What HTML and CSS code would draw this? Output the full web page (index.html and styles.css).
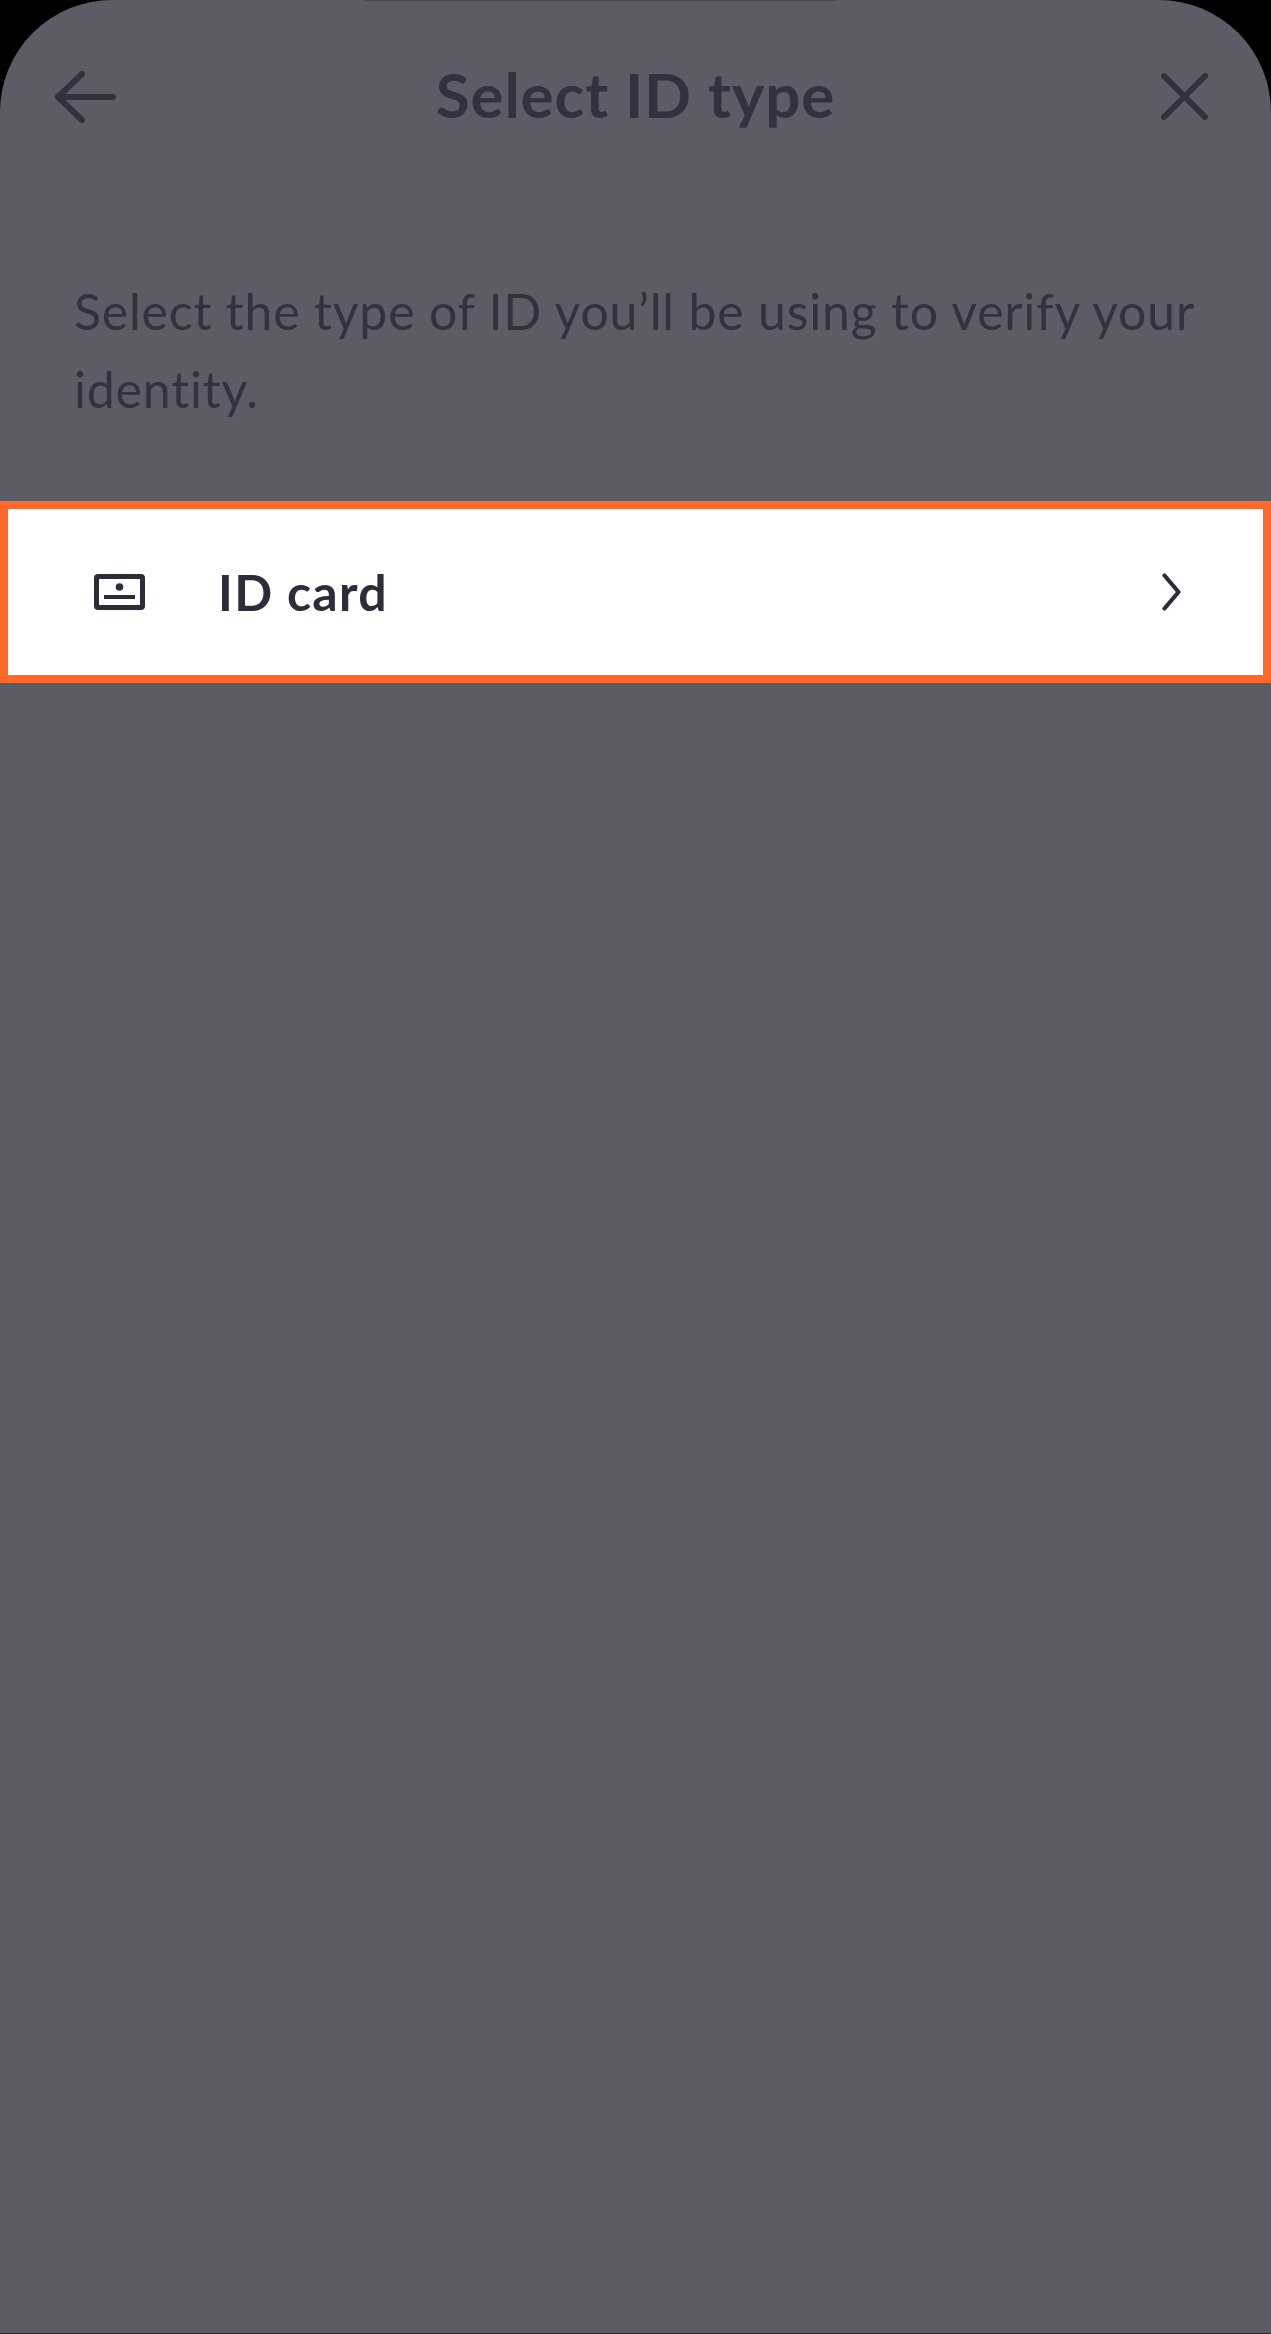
FILE: index.html
```html
<!DOCTYPE html>
<html lang="en">
<head>
    <meta charset="UTF-8">
    <meta name="viewport" content="width=device-width, initial-scale=1.0">
    <title>Select ID type</title>
    <link rel="stylesheet" href="styles.css">
</head>
<body>
    <div class="screen">
        <div class="top-edge"></div>
        <div class="header">
            <svg class="icon-back" viewBox="0 0 61 52" fill="none" stroke="#32313e" stroke-width="6" stroke-linecap="round" stroke-linejoin="round">
                <path d="M58 26H3"/>
                <path d="M27 3L3 26l24 23"/>
            </svg>
            <h1 class="title">Select ID type</h1>
            <svg class="icon-close" viewBox="0 0 47 47" fill="none" stroke="#32313e" stroke-width="6" stroke-linecap="round">
                <path d="M3 3l41 41"/>
                <path d="M44 3L3 44"/>
            </svg>
        </div>
        <p class="intro">Select the type of ID you’ll be using to verify your identity.</p>
        <div class="option">
            <svg class="icon-card" viewBox="0 0 51 36" fill="none">
                <rect x="2.5" y="2.5" width="46" height="31" rx="1.5" stroke="#2d2d3a" stroke-width="5"/>
                <path d="M10 23h31" stroke="#2d2d3a" stroke-width="4"/>
                <circle cx="25.5" cy="13" r="3.8" fill="#2d2d3a"/>
            </svg>
            <span class="option-label">ID card</span>
            <svg class="icon-chevron" viewBox="0 0 19 38" fill="none" stroke="#2d2d3a" stroke-width="4.2" stroke-linecap="round" stroke-linejoin="round">
                <path d="M2.5 2.5l14 16.500-14 16.500"/>
            </svg>
        </div>
    </div>
</body>
</html>
```

FILE: styles.css
```css
* {
    box-sizing: border-box;
}

html,
body {
    margin: 0;
    height: 100%;
    background: #000;
}

body {
    font-family: Lato, "Open Sans", sans-serif;
    color: #32313e;
}

.screen {
    height: 2334px;
    background: #5c5c67;
    border-radius: 112px 112px 0 0;
    border-bottom: 1px solid #2a2a38;
    overflow: hidden;
}

.top-edge {
    width: 472px;
    height: 1px;
    margin-left: 365px;
    background: #4a4a55;
}

.header {
    display: flex;
    justify-content: space-between;
    align-items: center;
    height: 191px;
    padding: 0 63px 0 55px;
}

.icon-back {
    width: 61px;
    height: 52px;
}

.icon-close {
    width: 47px;
    height: 47px;
}

.title {
    margin: 0 6px 6px 0;
    font-size: 62px;
    font-weight: 700;
    line-height: 1;
    letter-spacing: 0.8px;
}

.intro {
    margin: 80px 0 0;
    padding: 0 60px 0 74px;
    font-size: 50px;
    line-height: 78px;
    letter-spacing: 0.8px;
}

.option {
    display: flex;
    align-items: center;
    height: 182px;
    margin-top: 73px;
    padding: 0 82px 0 86px;
    background: #fff;
    border: 8px solid #ff682b;
    color: #2d2d3a;
}

.icon-card {
    width: 51px;
    height: 36px;
}

.option-label {
    flex: 1;
    margin-left: 73px;
    font-size: 50px;
    font-weight: 700;
    letter-spacing: 1.3px;
}

.icon-chevron {
    width: 19px;
    height: 38px;
}
```
